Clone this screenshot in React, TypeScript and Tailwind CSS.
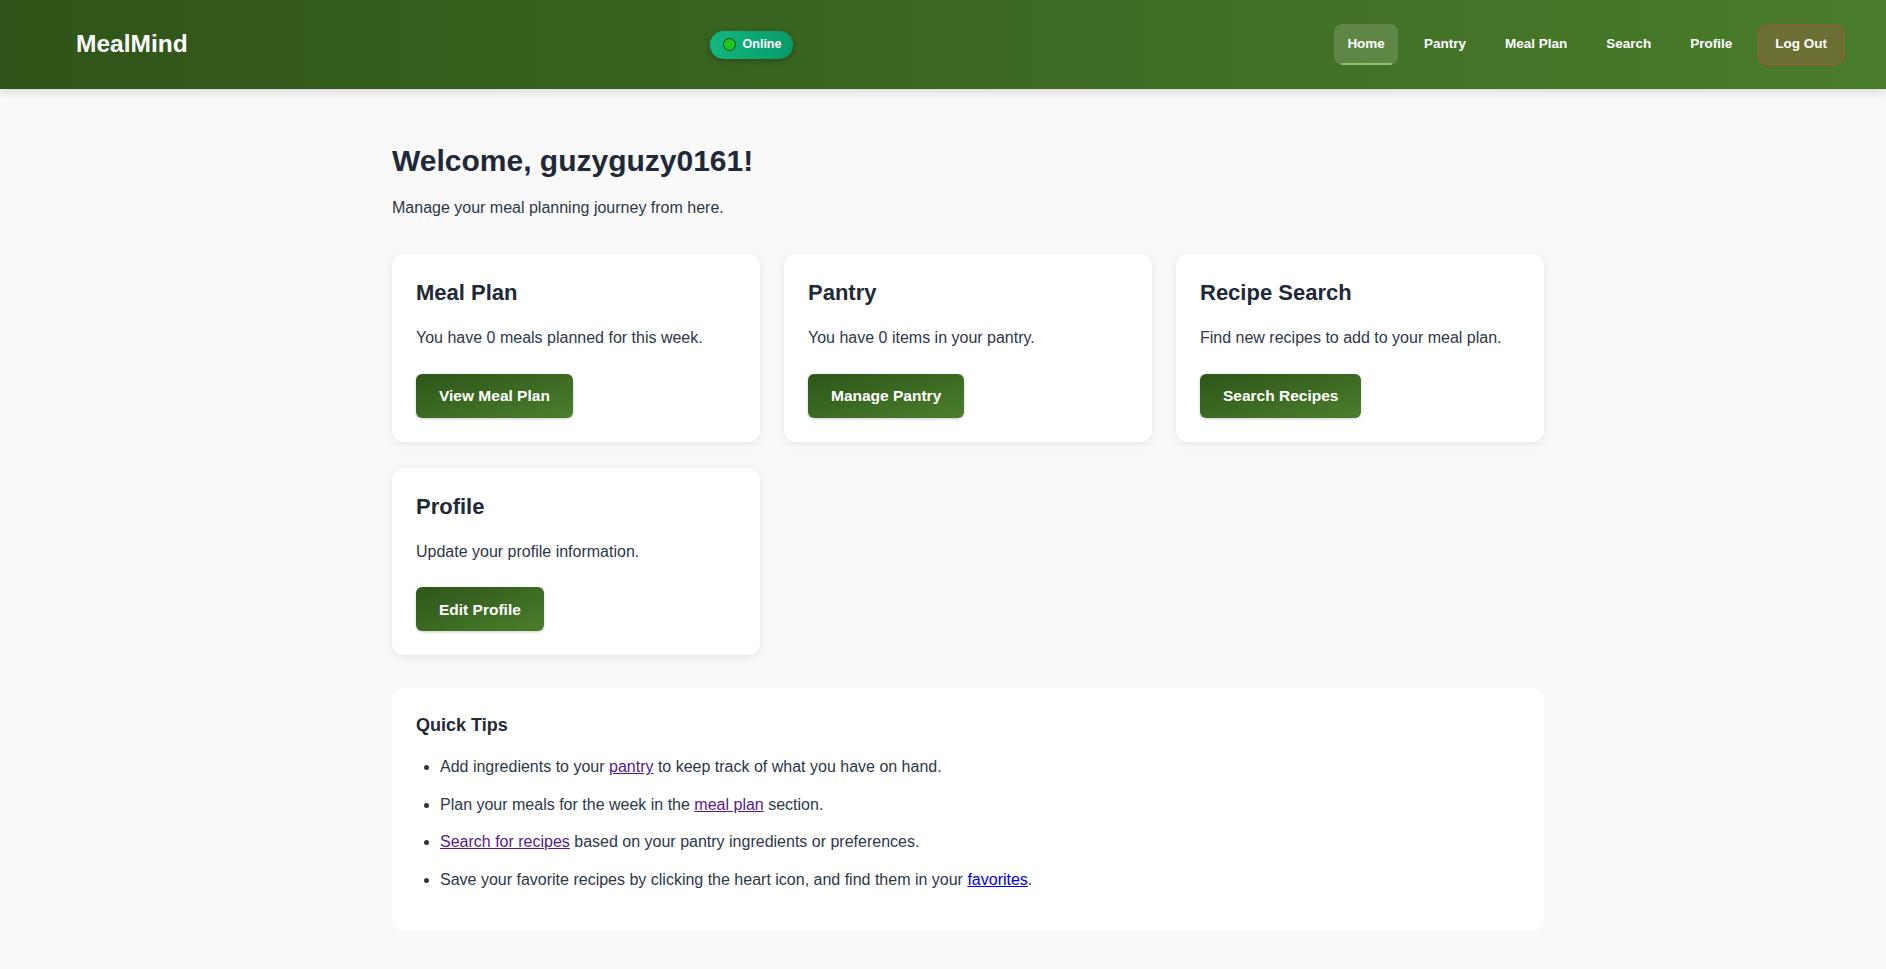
import React from "react";

const font = "font-['Liberation_Sans',Arial,sans-serif]";

const cards = [
  { title: "Meal Plan", text: "You have 0 meals planned for this week.", cta: "View Meal Plan" },
  { title: "Pantry", text: "You have 0 items in your pantry.", cta: "Manage Pantry" },
  { title: "Recipe Search", text: "Find new recipes to add to your meal plan.", cta: "Search Recipes" },
  { title: "Profile", text: "Update your profile information.", cta: "Edit Profile" },
];

const navItems = ["Pantry", "Meal Plan", "Search", "Profile"];

function Header() {
  return (
    <header className="h-[89px] flex items-center justify-between pl-[76px] pr-[42px] bg-gradient-to-r from-[#2f5419] to-[#4a7d2b] shadow-[0_2px_10px_rgba(0,0,0,0.15)]">
      <div className="text-white text-[24.5px] font-bold">MealMind</div>

      {/* status badge */}
      <div className="flex items-center gap-[7px] h-[28px] pl-[13px] pr-[12px] mr-[19px] rounded-full bg-gradient-to-r from-[#12b77f] to-[#069a6a] shadow-[0_2px_6px_rgba(0,0,0,0.25)]">
        <span className="w-[13px] h-[13px] rounded-full bg-[#22c51e] border border-[#14401a]" />
        <span className="text-white text-[12.5px] font-bold">Online</span>
      </div>

      <nav className="flex items-center gap-[13px]">
        <a className="relative h-[41px] flex items-center px-[13px] rounded-lg bg-white/15 text-white text-[13.5px] font-bold">
          Home
          <span className="absolute left-[7px] right-[6px] bottom-0 h-[2px] rounded-full bg-[#8cc36b]" />
        </a>
        {navItems.map((item) => (
          <a key={item} className="h-[41px] flex items-center px-[13px] text-white text-[13.5px] font-bold">
            {item}
          </a>
        ))}
        <button className="h-[40px] px-4 rounded-lg bg-[#6b6f33] border border-[#b0563a] text-white text-[13.5px] font-bold">
          Log Out
        </button>
      </nav>
    </header>
  );
}

function Card({ title, text, cta }: { title: string; text: string; cta: string }) {
  return (
    <div className="bg-white rounded-xl p-6 shadow-[0_2px_8px_rgba(0,0,0,0.09)]">
      <h2 className="text-[22px] font-bold leading-[29px] text-[#1f2937] mb-[18px]">{title}</h2>
      <p className="text-[16px] leading-[1.6] text-[#2d3748] mb-[23px]">{text}</p>
      <button className="h-[44px] px-[23px] rounded-md bg-gradient-to-br from-[#2d5519] to-[#4b7f2c] text-white text-[15.5px] font-bold shadow-[0_1px_3px_rgba(0,0,0,0.2)]">
        {cta}
      </button>
    </div>
  );
}

export default function App() {
  return (
    <div className={`min-h-screen bg-[#f9f9f9] ${font}`}>
      <Header />

      <main className="pl-[50px] pt-[53px] pb-10">
        <div className="max-w-[1152px] mx-auto">
          <h1 className="text-[30px] font-bold leading-[38px] text-[#1f2937] mb-4">Welcome, guzyguzy0161!</h1>
          <p className="text-[16px] leading-6 text-[#2d3748] mb-[34px]">Manage your meal planning journey from here.</p>

          <div className="grid grid-cols-3 gap-x-6 gap-y-[26px]">
            {cards.map((c) => (
              <Card key={c.title} {...c} />
            ))}
          </div>

          {/* tips */}
          <section className="mt-[33px] bg-white rounded-xl px-6 pt-6 pb-6">
            <h3 className="text-[18px] font-bold leading-[26px] text-[#1f2937] mb-4">Quick Tips</h3>
            <ul className="list-disc pl-6 mb-[14px] text-[16px] leading-[1.6] text-[#2d3748] marker:text-[#2d3748]">
              <li className="mb-3">
                Add ingredients to your <a className="underline text-[#551a8b]">pantry</a> to keep track of what you have on hand.
              </li>
              <li className="mb-3">
                Plan your meals for the week in the <a className="underline text-[#551a8b]">meal plan</a> section.
              </li>
              <li className="mb-3">
                <a className="underline text-[#551a8b]">Search for recipes</a> based on your pantry ingredients or preferences.
              </li>
              <li>
                Save your favorite recipes by clicking the heart icon, and find them in your{" "}
                <a className="underline text-[#0000ee]">favorites</a>.
              </li>
            </ul>
          </section>
        </div>
      </main>
    </div>
  );
}
